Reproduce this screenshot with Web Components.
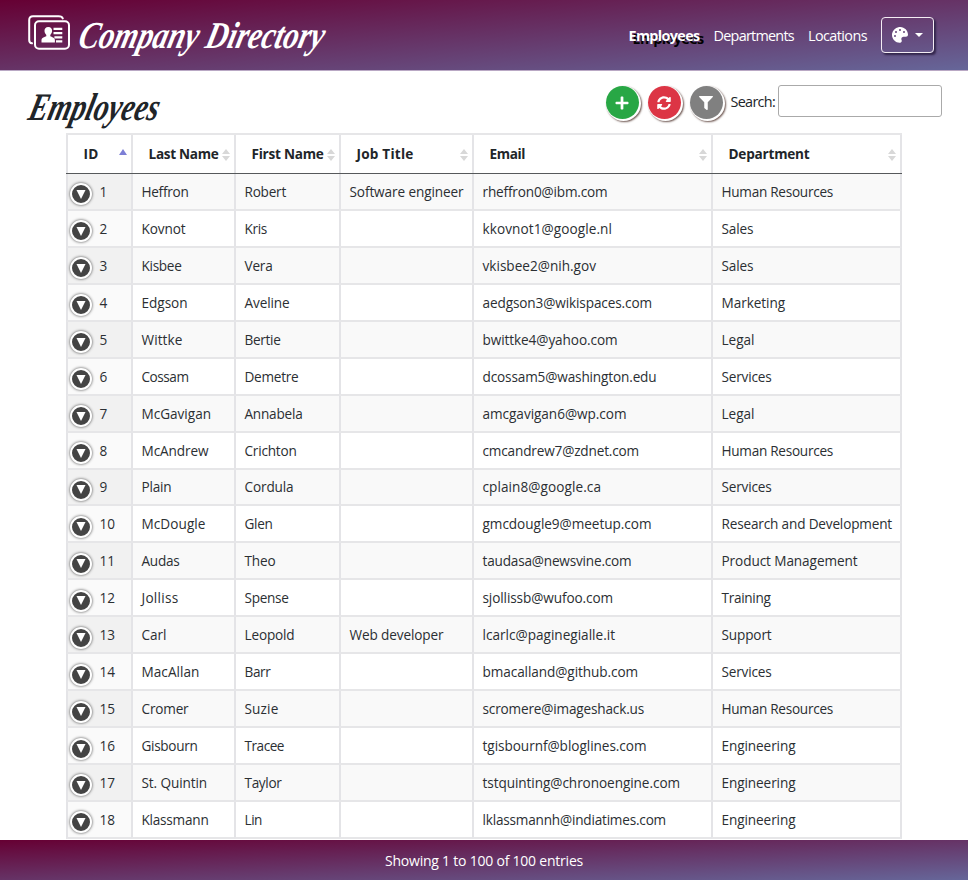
<!DOCTYPE html>
<html lang="en">
<head>
<meta charset="utf-8">
<title>Company Directory</title>
<style>
html,body{margin:0;height:100%;background:#fff;overflow:hidden}
body{font-family:"Segoe UI","Open Sans","Noto Sans",sans-serif;color:#212529;font-size:14px}
</style>
</head>
<body>
<directory-app></directory-app>
<script>
const define=(name,html,setup)=>customElements.define(name,class extends HTMLElement{
  connectedCallback(){
    if(this.shadowRoot)return;
    const root=this.attachShadow({mode:"open"});
    root.innerHTML=typeof html==="function"?html(this):html;
    if(setup)setup(this,root);
  }
});

/* Text stretched to an exact line width through letter spacing */
define("fit-text",`<style>:host{display:inline-block;white-space:pre}</style><span><slot></slot></span>`,(el,root)=>{
  const s=root.querySelector("span"),w=+el.getAttribute("w"),n=el.textContent.length;
  s.style.letterSpacing=(w-s.getBoundingClientRect().width)/n+"px";
});

/* Brush-style heading */
define("brush-title",el=>{
  const w=el.getAttribute("w"),size=el.getAttribute("size"),h=el.getAttribute("h"),b=el.getAttribute("base");
  return `<style>:host{display:block;height:${h}px}svg{display:block;overflow:visible}
  text{font:italic bold ${size}px "Brush Script MT","Liberation Serif",serif;fill:currentColor}</style>
  <svg width="${w}" height="${h}"><text x="0" y="${b}" transform="translate(${b*0.24} 0) skewX(-14)" textLength="${w}" lengthAdjust="spacingAndGlyphs">${el.getAttribute("label")}</text></svg>`;
});

define("brand-logo",`<style>:host{display:block;width:42px;height:36px}svg{display:block}</style>
<svg width="42" height="36" viewBox="0 0 42 36" fill="none" stroke="#fff" stroke-width="2" stroke-linecap="round">
<path d="M4 28.3Q1.2 28 1.2 25V5Q1.2 1.2 5 1.2H30.5Q34.2 1.2 34.8 3.4"/>
<rect x="7" y="6.3" width="34" height="27.4" rx="4"/>
<g fill="#fff" stroke="none"><path d="M20.3 12c-2.6 0-4 1.8-3.8 4.1.1 1.7.9 3 1.8 3.8v1.4c-1.6.8-4.8 1.3-4.8 3.8V27.5h13.4v-2.4c0-2.5-3.2-3-4.6-3.8v-1.4c.9-.8 1.7-2.1 1.8-3.8.2-2.3-1.2-4.1-3.8-4.1z"/>
<path d="M25.5 12.8h8.8v2.2h-8.8zM25.5 17h8.8v2.2h-8.8zM26.4 21.2h7.9v2.2h-7.9zM28 25.2h6.3v2.2H28z"/></g></svg>`);

define("palette-button",`<style>
:host{display:flex;box-sizing:border-box;width:53px;height:36px;border:1px solid #f4edf4;border-radius:4px;align-items:center;justify-content:center;gap:7px;box-shadow:2px 2px 2px #33264c}
i{width:0;height:0;border:4.5px solid transparent;border-top:4px solid #fff;border-bottom:0}</style>
<svg width="16" height="16" viewBox="0 0 512 512" fill="#fff"><path d="M204 5C105 24 25 104 5 203c-36 187 128 322 258 302 42-6 63-56 43-93-23-46 10-100 61-100h80c35 0 64-29 65-64C511 95 370-27 204 5zM96 320a32 32 0 1 1 0-64 32 32 0 0 1 0 64zm32-128a32 32 0 1 1 0-64 32 32 0 0 1 0 64zm128-64a32 32 0 1 1 0-64 32 32 0 0 1 0 64zm128 64a32 32 0 1 1 0-64 32 32 0 0 1 0 64z"/></svg><i></i>`);

define("site-header",`<style>
:host{display:flex;box-sizing:border-box;height:71px;flex:none;padding:0 34px 0 28px;background:linear-gradient(to bottom right,#603,#669);color:#fff;border-bottom:1px solid #b9a8c4}
brand-logo{margin-top:15px}brush-title{margin:14px 0 0 7px}
nav{display:flex;margin-left:auto;height:36px;margin-top:17px;align-items:center;gap:14px;font-size:14.4px}
b{text-shadow:4px 3px 0 #000}</style>
<brand-logo></brand-logo><brush-title label="Company Directory" w="245" h="40" base="34" size="38"></brush-title>
<nav><b><fit-text w="71">Employees</fit-text></b><fit-text w="80.5">Departments</fit-text><fit-text w="59">Locations</fit-text><palette-button></palette-button></nav>`);

define("round-button",el=>`<style>
:host{display:flex;width:33px;height:33px;border-radius:50%;background:${el.getAttribute("color")};align-items:center;justify-content:center;box-shadow:1px 1px 0 1px #fff,2px 2px 2px 1px #6d5650}
svg{display:block}</style>
<svg width="14" height="14" viewBox="0 0 512 512" fill="#fff">${{
plus:'<path d="M465 206H306V47q0-28-28-28h-44q-28 0-28 28v159H47q-28 0-28 28v44q0 28 28 28h159v159q0 28 28 28h44q28 0 28-28V306h159q28 0 28-28v-44q0-28-28-28z"/>',
sync:'<path d="M370.7 133.3C339.5 104 298.9 88 255.8 88c-77.5.1-144.3 53.2-162.8 126.9-1.3 5.4-6.1 9.1-11.7 9.1H24.1c-7.5 0-13.2-6.8-11.8-14.2C33.9 94.9 134.8 8 256 8c66.4 0 126.8 26.1 171.3 68.7L463 41c15.1-15.1 41-4.4 41 17v134c0 13.3-10.7 24-24 24H346c-21.4 0-32.1-25.9-17-41l41.7-41.7zM32 296h134c21.4 0 32.1 25.9 17 41l-41.8 41.8c31.3 29.3 71.8 45.3 114.9 45.2 77.4-.1 144.3-53.1 162.8-126.8 1.3-5.4 6.1-9.1 11.7-9.1h57.3c7.5 0 13.2 6.8 11.8 14.2C478.1 417.1 377.2 504 256 504c-66.4 0-126.8-26.1-171.3-68.7L49 471c-15.1 15.1-41 4.4-41-17V320c0-13.3 10.7-24 24-24z"/>',
filter:'<path d="M488 0H24C2.7 0-8 25.9 7.1 41L192 225.9V432c0 7.8 3.8 15.2 10.2 19.7l80 56C298 518.7 320 507.5 320 488V225.9L505 41C520 25.9 509.3 0 488 0z"/>'}[el.getAttribute("icon")]}</svg>`);

define("table-toolbar",`<style>
:host{display:flex;box-sizing:border-box;height:62px;flex:none;padding:0 26px 0 28px}
brush-title{margin:18px 0 0 -1px}.tools{display:flex;margin-left:auto}
.buttons{display:flex;gap:9px;margin:15px 8px 0 0}
.search{display:flex;gap:3px;margin-top:14px;font-size:14.4px}
.search label{line-height:33px}
input{box-sizing:border-box;width:164px;height:32px;border:1px solid #aaa;border-radius:3px;background:#fff;padding:5px;font:inherit}</style>
<brush-title label="Employees" w="130" h="40" base="31" size="39"></brush-title>
<div class="tools"><div class="buttons"><round-button icon="plus" color="#28a745"></round-button><round-button icon="sync" color="#dc3545"></round-button><round-button icon="filter" color="#808080"></round-button></div>
<div class="search"><label for="q"><fit-text w="44.5">Search:</fit-text></label><input id="q"></div></div>`);

define("sort-arrows",el=>{const up=el.hasAttribute("active");return `<style>:host{display:block;width:8px;height:12px}svg{display:block}</style>
<svg width="8" height="12">${up?'<path d="M4 0 8 6H0z" fill="#7d7fd6"/>':'<path d="M4 0 8 5H0zM4 12 8 7H0z" fill="#d8d8d8"/>'}</svg>`});

define("expand-icon",`<style>:host{display:flex;box-sizing:border-box;width:22px;height:22px;border:2px solid #fff;border-radius:50%;background:#444;box-shadow:0 0 3px #444;align-items:center;justify-content:center}</style>
<svg width="10" height="9"><path d="M.5 0H9.5L5 9z" fill="#fff"/></svg>`);

const staff=`Heffron|Robert|Software engineer|rheffron0@ibm.com|Human Resources
Kovnot|Kris||kkovnot1@google.nl|Sales
Kisbee|Vera||vkisbee2@nih.gov|Sales
Edgson|Aveline||aedgson3@wikispaces.com|Marketing
Wittke|Bertie||bwittke4@yahoo.com|Legal
Cossam|Demetre||dcossam5@washington.edu|Services
McGavigan|Annabela||amcgavigan6@wp.com|Legal
McAndrew|Crichton||cmcandrew7@zdnet.com|Human Resources
Plain|Cordula||cplain8@google.ca|Services
McDougle|Glen||gmcdougle9@meetup.com|Research and Development
Audas|Theo||taudasa@newsvine.com|Product Management
Jolliss|Spense||sjollissb@wufoo.com|Training
Carl|Leopold|Web developer|lcarlc@paginegialle.it|Support
MacAllan|Barr||bmacalland@github.com|Services
Cromer|Suzie||scromere@imageshack.us|Human Resources
Gisbourn|Tracee||tgisbournf@bloglines.com|Engineering
St. Quintin|Taylor||tstquinting@chronoengine.com|Engineering
Klassmann|Lin||lklassmannh@indiatimes.com|Engineering`.split("\n").map(r=>r.split("|"));
const widths={ // drawn line widths of the cells, by column
  0:[47,44,40,46,41,47,69.5,67,30,64,38,37,25,58,47,56,65.5,67],
  1:[41.5,22.5,28,45,36,54,58,52,49,28,31,44,50,26,34,39.5,37,17.5],
  2:[114,0,0,0,0,0,0,0,0,0,0,0,94],
  3:[125,129.5,113.5,169.5,135,174,144,156.5,118.5,169,149,130.5,132.5,155.5,161.5,164,197.5,183.5],
  4:[111.5,32,32,63.5,33,50,33,111.5,50,170.5,136,49,50,50,111.5,74,74,74]};

define("employee-table",()=>{
  const heads=[["ID",15],["Last Name",70],["First Name",72],["Job Title",57],["Email",35.5],["Department",81]];
  return `<style>
:host{display:block;width:836px;height:706px;flex:none;margin-left:66px;overflow:hidden;box-sizing:border-box;border-top:2px solid #e6e6e8}
.row{display:grid;grid-template-columns:65px 103px 105px 133px 239px 191px;height:36.94px;white-space:nowrap;font-size:13.6px;color:#2b2f33}
.row>div{display:flex;box-sizing:border-box;border-left:2px solid #e4e4e7;border-bottom:2px solid #e6e6e8;align-items:center;padding:0 0 0 8.5px}
.row>div:last-child{border-right:2px solid #e4e4e7}
.row.odd{background:#f9f9f9}.row.odd>.id{background:#f1f1f1}.row.even>.id{background:#fafafa}
.row>.id{padding-left:2px;gap:7.5px}.id expand-icon{margin-top:6px}
.row.head{height:39px;font-weight:700;border-bottom:1px solid #56595b;background:#fff;box-sizing:border-box;color:#212529}
.head>div{border-bottom:0;padding:0 4px 1px 15.5px}
.head sort-arrows{margin:3px 0 0 auto}
.head>.id{padding:0 4px 1px 15.5px}.head .id sort-arrows{margin-top:2px}</style>
<div class="row head">${heads.map(([t,w],i)=>`<div class="${i?"":"id"}"><fit-text w="${w}">${t}</fit-text><sort-arrows ${i?"":"active"}></sort-arrows></div>`).join("")}</div>
${staff.map((r,n)=>`<div class="row ${n%2?"even":"odd"}"><div class="id"><expand-icon></expand-icon><fit-text w="${n<9?8:15.5}">${n+1}</fit-text></div>${r.map((t,c)=>`<div>${t?`<fit-text w="${widths[c][n]}">${t}</fit-text>`:""}</div>`).join("")}</div>`).join("")}`;
});

define("site-footer",`<style>:host{display:flex;height:40px;margin-top:auto;flex:none;align-items:center;justify-content:center;color:#fff;background:linear-gradient(to bottom right,#603,#669);font-size:14px}
fit-text{margin-top:1px}</style><fit-text w="198">Showing 1 to 100 of 100 entries</fit-text>`);

define("directory-app",`<style>:host{display:flex;flex-direction:column;height:880px;width:968px;overflow:hidden}</style>
<site-header></site-header><table-toolbar></table-toolbar><employee-table></employee-table><site-footer></site-footer>`);
</script>
</body>
</html>
